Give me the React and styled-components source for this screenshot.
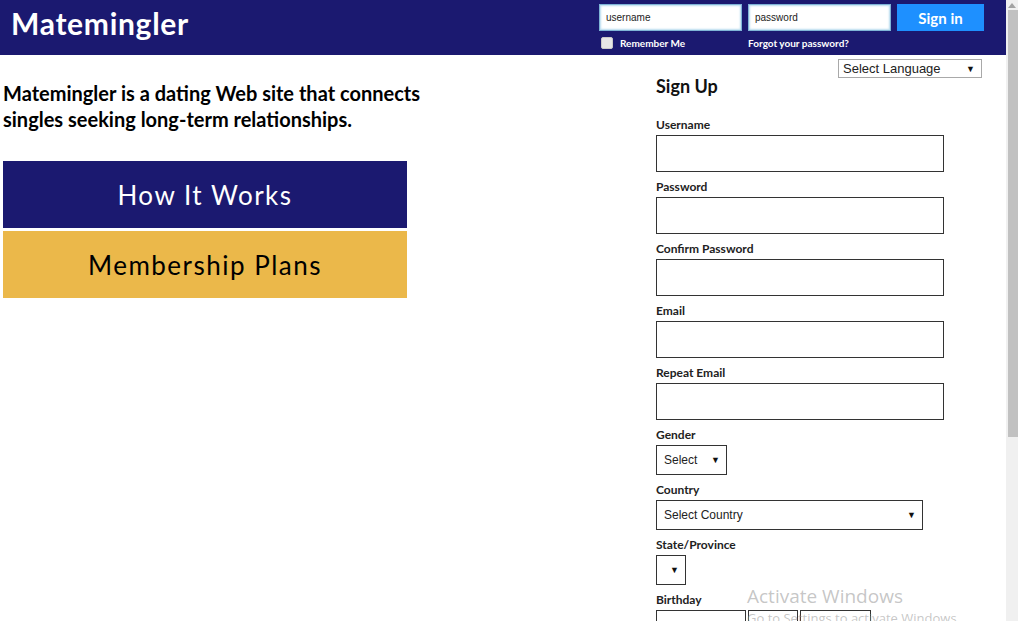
import React from 'react'
import styled, { createGlobalStyle } from 'styled-components'

const GlobalStyle = createGlobalStyle`
  html, body {
    margin: 0;
    padding: 0;
    overflow: hidden;
    background: #fff;
  }
  * { box-sizing: border-box; }
`

const NAVY = '#1b1970'
const humanist = `Lato, "Open Sans", sans-serif`
const arial = `"Liberation Sans", Arial, sans-serif`

const Page = styled.div`
  display: flex;
  width: 1018px;
  height: 621px;
  overflow: hidden;
  position: relative;
`

const Main = styled.div`
  flex: 1;
  display: flex;
  flex-direction: column;
  min-width: 0;
`

const Header = styled.header`
  flex-shrink: 0;
  height: 55px;
  background: ${NAVY};
  display: flex;
  justify-content: space-between;
  padding: 0 22px 0 11px;
`

const Logo = styled.h1`
  margin: 0;
  font-family: ${humanist};
  font-weight: 700;
  font-size: 30px;
  letter-spacing: 0.7px;
  color: #fff;
  line-height: 46px;
`

const Login = styled.form`
  display: grid;
  grid-template-columns: 143px 143px 87px;
  column-gap: 6px;
  row-gap: 5px;
  padding-top: 4px;
  align-content: start;
`

const LoginInput = styled.input`
  height: 27px;
  width: 100%;
  border: 1px solid #7fb4d6;
  box-shadow: inset 0 0 2px 1px #b9dcef;
  background: #fff;
  font-family: ${arial};
  font-size: 10px;
  color: #222;
  padding: 0 6px;
  outline: none;
`

const SignIn = styled.button`
  height: 27px;
  border: none;
  background: #1e90ff;
  color: #fff;
  font-family: ${humanist};
  font-weight: 700;
  font-size: 15px;
  cursor: pointer;
`

const Small = styled.label`
  display: flex;
  align-items: center;
  gap: 7px;
  font-family: ${humanist};
  font-weight: 700;
  font-size: 10px;
  color: #fff;
  height: 14px;
  padding-left: ${p => p.$indent || 0}px;
`

const Check = styled.span`
  width: 12px;
  height: 12px;
  border-radius: 2px;
  background: #e6e6e6;
  border: 1px solid #c9c9c9;
`

const Body = styled.div`
  flex: 1;
  display: flex;
  padding-left: 3px;
`

const Left = styled.section`
  width: 653px;
  padding-top: 25px;
`

const Intro = styled.p`
  margin: 0 0 29px;
  font-family: ${humanist};
  font-weight: 700;
  font-size: 20px;
  line-height: 26px;
  color: #000;
`

const Tiles = styled.div`
  display: flex;
  flex-direction: column;
  gap: 3px;
  width: 404px;
`

const Tile = styled.a`
  height: 67px;
  display: flex;
  align-items: center;
  justify-content: center;
  background: ${p => p.$bg};
  color: ${p => p.$fg};
  font-family: ${humanist};
  font-size: 26px;
  letter-spacing: 1.5px;
  text-decoration: none;
`

const Right = styled.section`
  flex: 1;
  display: flex;
  flex-direction: column;
  padding-right: 24px;
  position: relative;
`

const SelectWrap = styled.div`
  position: relative;
  width: ${p => p.$w}px;
  height: ${p => p.$h}px;
  align-self: ${p => p.$self || 'auto'};
  margin-top: ${p => p.$mt || 0}px;
  &::after {
    content: '▼';
    position: absolute;
    right: ${p => p.$ar || 7}px;
    top: 50%;
    transform: translateY(-50%);
    font-size: ${p => p.$as || 9}px;
    color: #111;
    pointer-events: none;
  }
`

const Select = styled.select`
  appearance: none;
  width: 100%;
  height: 100%;
  border: 1px solid ${p => (p.$light ? '#a9a9a9' : '#333')};
  background: #fff;
  font-family: ${arial};
  font-size: ${p => p.$fs || 12}px;
  color: #222;
  padding: 0 0 0 ${p => p.$pl || 7}px;
  border-radius: 0;
  outline: none;
`

const SignUpTitle = styled.h2`
  margin: -4px 0 0;
  font-family: ${humanist};
  font-weight: 700;
  font-size: 18px;
  line-height: 24px;
  color: #111;
`

const SignUpForm = styled.form`
  display: flex;
  flex-direction: column;
  padding-top: 19px;
`

const Field = styled.div`
  display: flex;
  flex-direction: column;
  gap: 2px;
  margin-bottom: 7px;
`

const Label = styled.label`
  font-family: ${humanist};
  font-weight: 700;
  font-size: 12px;
  line-height: 16px;
  color: #222;
`

const TextBox = styled.input`
  width: ${p => p.$w || 288}px;
  height: 37px;
  border: 1px solid #333;
  background: #fff;
  outline: none;
  border-radius: 0;
`

const Row = styled.div`
  display: flex;
  gap: ${p => p.$gap || 2}px;
`

const Scrollbar = styled.div`
  width: 12px;
  background: #f0f0f0;
  display: flex;
  flex-direction: column;
  align-items: center;
`

const ScrollArrow = styled.div`
  height: 10px;
  display: flex;
  align-items: center;
  justify-content: center;
`

const Thumb = styled.div`
  width: 10px;
  margin-left: 2px;
  height: 427px;
  background: #c1c1c1;
`

const Watermark = styled.div`
  position: absolute;
  left: 747px;
  top: 583px;
  font-family: "Open Sans", "Noto Sans", sans-serif;
  color: rgba(150, 150, 150, 0.55);
  pointer-events: none;
  white-space: nowrap;
`

const WmTitle = styled.div`
  font-size: 19px;
  line-height: 26px;
`

const WmSub = styled.div`
  font-size: 13px;
  line-height: 18px;
`

const fields = ['Username', 'Password', 'Confirm Password', 'Email', 'Repeat Email']

export default function App() {
  return (
    <Page>
      <GlobalStyle />
      <Main>
        <Header>
          <Logo>Matemingler</Logo>
          <Login onSubmit={e => e.preventDefault()}>
            <LoginInput defaultValue="username" />
            <LoginInput defaultValue="password" />
            <SignIn type="submit">Sign in</SignIn>
            <Small $indent={2}><Check />Remember Me</Small>
            <Small>Forgot your password?</Small>
          </Login>
        </Header>
        <Body>
          <Left>
            <Intro>
              Matemingler is a dating Web site that connects<br />
              singles seeking long-term relationships.
            </Intro>
            <Tiles>
              <Tile href="#" $bg={NAVY} $fg="#fff">How It Works</Tile>
              <Tile href="#" $bg="#ebb84a" $fg="#000">Membership Plans</Tile>
            </Tiles>
          </Left>
          <Right>
            <SelectWrap $w={144} $h={19} $self="flex-end" $mt={4} $ar={7} $as={9}>
              <Select $light $fs={13} $pl={4}>
                <option>Select Language</option>
              </Select>
            </SelectWrap>
            <SignUpTitle>Sign Up</SignUpTitle>
            <SignUpForm onSubmit={e => e.preventDefault()}>
              {fields.map(f => (
                <Field key={f}>
                  <Label>{f}</Label>
                  <TextBox type={f.includes('Password') ? 'password' : 'text'} />
                </Field>
              ))}
              <Field>
                <Label>Gender</Label>
                <SelectWrap $w={71} $h={30}>
                  <Select><option>Select</option></Select>
                </SelectWrap>
              </Field>
              <Field>
                <Label>Country</Label>
                <SelectWrap $w={267} $h={30}>
                  <Select><option>Select Country</option></Select>
                </SelectWrap>
              </Field>
              <Field>
                <Label>State/Province</Label>
                <SelectWrap $w={30} $h={30}>
                  <Select><option></option></Select>
                </SelectWrap>
              </Field>
              <Field>
                <Label>Birthday</Label>
                <Row $gap={2}>
                  <TextBox $w={90} />
                  <TextBox $w={50} />
                  <TextBox $w={71} />
                </Row>
              </Field>
            </SignUpForm>
          </Right>
        </Body>
      </Main>
      <Scrollbar>
        <ScrollArrow>
          <svg width="8" height="5" viewBox="0 0 8 5">
            <path d="M0 5 L4 0 L8 5 Z" fill="#a3a3a3" />
          </svg>
        </ScrollArrow>
        <Thumb />
      </Scrollbar>
      <Watermark>
        <WmTitle>Activate Windows</WmTitle>
        <WmSub>Go to Settings to activate Windows.</WmSub>
      </Watermark>
    </Page>
  )
}
